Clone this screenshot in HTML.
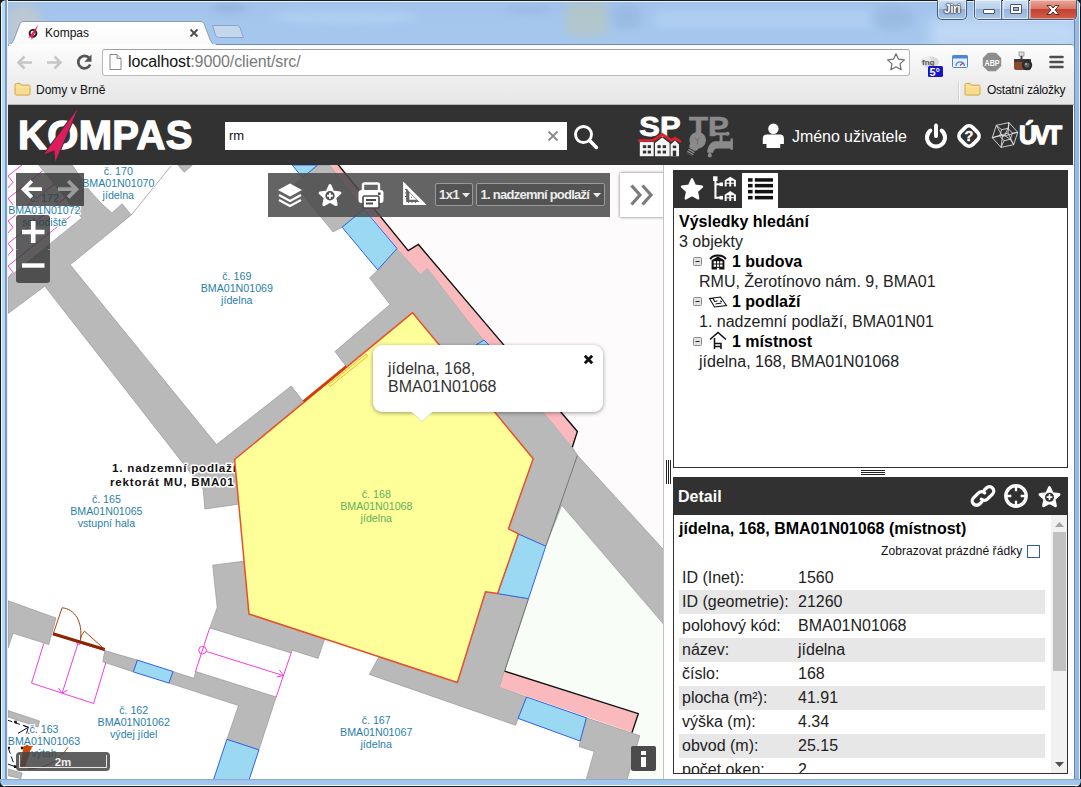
<!DOCTYPE html>
<html lang="cs">
<head>
<meta charset="utf-8">
<title>Kompas</title>
<style>
*{box-sizing:border-box;margin:0;padding:0}
html,body{width:1081px;height:787px;overflow:hidden}
body{position:relative;font-family:"Liberation Sans",Arial,sans-serif;background:#1c1c1c;color:#000}
.abs{position:absolute}
/* ---------- window frame ---------- */
#frame{left:0;top:0;width:1081px;height:787px;border-radius:7px 7px 7px 7px;overflow:hidden;
 background:linear-gradient(180deg,#a1c2ea 0,#a4c6ec 20px,#a6c8ee 44px,#a6cbf0 110px,#a6cbf0 100%)}
#frame .edgeL{left:0;top:0;width:8px;height:787px;background:linear-gradient(90deg,#15151a 0,#15151a 1px,#eefcff 1px,#eefcff 2px,#b5dcfc 2px,#b9d9f8 5px,#7b9bb8 5.500px,#7b9bb8 7px,#f2f1ef 7px,#f2f1ef 8px)}
#frame .edgeR{left:1074px;top:0;width:7px;height:787px;background:linear-gradient(90deg,#6887a2 0,#6887a2 1px,#9bb9e4 1.500px,#94b8e0 5px,#e4f4fe 5px,#e4f4fe 6px,#0d1119 6px)}
#frame .edgeB{left:0;top:779px;width:1081px;height:8px;background:linear-gradient(180deg,#8fa9c8 0,#8fa9c8 1px,#9fc4ee 1px,#a3c8f0 6px,#eef6fe 6px,#eef6fe 7px,#1c1c1c 7px)}
#frame .edgeT{left:0;top:0;width:1081px;height:2px;background:linear-gradient(180deg,#1c1c1c 0,#1c1c1c 1px,#eaf4fe 1px,#eaf4fe 2px)}
.blob{position:absolute;border-radius:50%;filter:blur(6px)}
/* ---------- chrome ---------- */
#tab{left:8px;top:21px;width:212px;height:24px;z-index:2}
#toolbar{left:8px;top:44px;width:1066px;height:33px;background:linear-gradient(180deg,#fdfdfd 0,#efefef 100%);border-top:1px solid #6f87a8;border-radius:3px 3px 0 0}
#bookbar{left:8px;top:77px;width:1066px;height:28px;background:linear-gradient(180deg,#efefef 0,#e6e6e6 100%);border-bottom:1px solid #b6b4b6}
#omni{left:102px;top:49px;width:808px;height:27px;background:#fff;border:1px solid #b9b9b9;border-top-color:#a2a2a2;border-radius:3px}
.ui{font-family:"Liberation Sans","DejaVu Sans",sans-serif}
/* ---------- app ---------- */
#app{left:8px;top:105px;width:1066px;height:674px;background:#fff;overflow:hidden}
#hdr{left:0;top:0;width:1065px;height:60px;background:#323232}
#map{left:0;top:60px;width:655px;height:614px;background:#fff;overflow:hidden}
.lbl{font-size:10.67px;line-height:12px;text-anchor:middle;fill:#2a7fa8}
</style>
</head>
<body>
<div id="frame" class="abs">
  <div class="blob" style="left:6px;top:4px;width:36px;height:40px;background:#c3c8cc;opacity:.8;filter:blur(5px)"></div>
  <div class="blob" style="left:212px;top:3px;width:34px;height:10px;background:#8fb0dc;opacity:.7;filter:blur(3px)"></div>
  <div class="blob" style="left:270px;top:10px;width:150px;height:14px;background:#b4d2f4;opacity:.7;filter:blur(4px)"></div>
  <div class="blob" style="left:505px;top:6px;width:46px;height:8px;background:#94b4de;opacity:.55;filter:blur(3px)"></div>
  <div class="blob" style="left:566px;top:0px;width:42px;height:36px;background:#c6c79c;opacity:.4;filter:blur(5px);border-radius:6px"></div>
  <div class="blob" style="left:612px;top:4px;width:30px;height:26px;background:#8fb0dc;opacity:.5;filter:blur(4px)"></div>
  <div class="blob" style="left:655px;top:10px;width:225px;height:18px;background:#b6d3f4;opacity:.6;filter:blur(4px);border-radius:4px"></div>
  <div class="blob" style="left:870px;top:6px;width:44px;height:24px;background:#8eaed6;opacity:.45;filter:blur(4px)"></div>
  <div class="blob" style="left:930px;top:18px;width:150px;height:30px;background:#c6dcf7;opacity:.8;filter:blur(7px);border-radius:8px"></div>
  <div class="abs edgeT"></div><div class="abs edgeL"></div><div class="abs edgeR"></div><div class="abs edgeB"></div>
</div>


<!-- window caption buttons -->
<div class="abs" style="left:937px;top:0;width:30px;height:20px;border:1px solid #4a5a70;border-top:none;border-radius:0 0 5px 5px;background:linear-gradient(180deg,#c8dcf2 0,#b4cdea 45%,#93b1d6 50%,#a8c4e6 100%);box-shadow:inset 0 0 0 1px rgba(255,255,255,.55)"></div>
<div class="abs ui" style="left:937px;top:2px;width:30px;height:15px;text-align:center;font-size:12px;line-height:15px;font-weight:bold;color:#fff;letter-spacing:-.5px;text-shadow:0 0 2px #223,0 0 1px #223,0 0 2px #223">Jiri</div>
<div class="abs" style="left:974px;top:0;width:103px;height:20px;border:1px solid #4a5a70;border-top:none;border-radius:0 0 5px 5px;overflow:hidden;box-shadow:0 0 0 1px rgba(255,255,255,.35)">
  <div class="abs" style="left:0;top:0;width:27px;height:19px;background:linear-gradient(180deg,#cfe0f4 0,#b9d0ec 45%,#98b4d8 50%,#adc8e8 100%);border-right:1px solid #5b6b82;box-shadow:inset 0 0 0 1px rgba(255,255,255,.55)"></div>
  <div class="abs" style="left:28px;top:0;width:26px;height:19px;background:linear-gradient(180deg,#cfe0f4 0,#b9d0ec 45%,#98b4d8 50%,#adc8e8 100%);border-right:1px solid #5b6b82;box-shadow:inset 0 0 0 1px rgba(255,255,255,.55)"></div>
  <div class="abs" style="left:55px;top:0;width:47px;height:19px;background:linear-gradient(180deg,#e8a99a 0,#d9786a 45%,#c4402f 50%,#d2604c 100%);box-shadow:inset 0 0 0 1px rgba(255,255,255,.4)"></div>
  <div class="abs" style="left:8px;top:9px;width:12px;height:5px;background:#fff;border:1px solid #4a5568;border-radius:1px"></div>
  <div class="abs" style="left:35px;top:4px;width:12px;height:10px;background:#fff;border:1px solid #4a5568;border-radius:1px"></div>
  <div class="abs" style="left:38px;top:7px;width:6px;height:4px;background:#9db7da;border:1px solid #4a5568"></div>
  <svg class="abs" style="left:70px;top:4px" width="16" height="12" viewBox="0 0 16 12"><path d="M2 1.500h3.800L8 4l2.200-2.500H14L10.200 6 14 10.500h-3.800L8 8 5.800 10.500H2L5.800 6z" fill="#fff" stroke="#5a2a28" stroke-width="1"/></svg>
</div>

<!-- new tab button -->
<svg class="abs" style="left:208px;top:22px" width="40" height="22" viewBox="0 0 40 22"><path d="M4.5 3.5h24c2 0 3 1 3.6 2.6l3.4 9.400h-24.500c-2 0-3-1-3.600-2.600z" fill="#c9d9ec" fill-opacity=".85" stroke="#8ea4c2" stroke-width="1"/></svg>
<!-- active tab -->
<svg id="tab" class="abs" width="212" height="24" viewBox="0 0 212 24">
  <defs><linearGradient id="tg" x1="0" y1="0" x2="0" y2="1"><stop offset="0" stop-color="#ffffff"/><stop offset="1" stop-color="#fafafa"/></linearGradient></defs>
  <path d="M0 24 C4 23 5 21 6.500 17 L11.500 4 C12.500 1.500 13.500 .5 16 .5 H192 C194.500 .5 195.500 1.500 196.500 4 L201.500 17 C203 21 204 23 208 24 Z" fill="url(#tg)" stroke="#8d9cb3" stroke-width="1"/>
  <rect x="1" y="23" width="206.500" height="1.200" fill="#fcfcfc"/>
</svg>
<!-- favicon -->
<svg class="abs" style="left:25px;top:24px;z-index:3" width="16" height="17" viewBox="0 0 16 17"><circle cx="8" cy="9.300" r="3.400" fill="none" stroke="#222" stroke-width="1.900"/><path d="M13.500 .5 L3.200 14 L6.200 12.800 L6.800 16 Z" fill="#e31c5f"/></svg>
<div class="abs ui" style="left:45px;top:25px;font-size:12px;line-height:16px;color:#111;z-index:3">Kompas</div>
<svg class="abs" style="left:189px;top:28px;z-index:3" width="10" height="10" viewBox="0 0 10 10"><path d="M1.500 1.500l7 7M8.500 1.500l-7 7" stroke="#4a4a4a" stroke-width="1.800"/></svg>

<div id="toolbar" class="abs"></div>
<div id="bookbar" class="abs"></div>
<!-- nav buttons -->
<svg class="abs" style="left:16px;top:53px" width="84" height="19" viewBox="0 0 84 19">
  <path d="M16 9.500H3.500M8.500 3.500L2.500 9.500l6 6" fill="none" stroke="#c6c6c6" stroke-width="2.600"/>
  <path d="M31 9.500h12.500M38.500 3.500l6 6l-6 6" fill="none" stroke="#c6c6c6" stroke-width="2.600"/>
  <path d="M73.300 5.200A6.200 6.200 0 1 0 74.200 11.500" fill="none" stroke="#555" stroke-width="2.700"/>
  <path d="M75.500 1.500v7.200h-7.200z" fill="#555"/>
</svg>
<div id="omni" class="abs"></div>
<svg class="abs" style="left:109px;top:54px" width="13" height="16" viewBox="0 0 13 16"><path d="M1 .5h7l4 4v11H1z" fill="#fdfdfd" stroke="#8a8a8a"/><path d="M8 .5v4h4" fill="#e2e2e2" stroke="#8a8a8a"/></svg>
<div class="abs ui" style="left:128px;top:52px;font-size:16px;line-height:20px;color:#111;letter-spacing:-.1px;white-space:nowrap">localhost<span style="color:#7a7a7a">:9000/client/src/</span></div>
<svg class="abs" style="left:886px;top:52px" width="20" height="20" viewBox="0 0 20 20"><path d="M10 1.800l2.500 5.400 5.900.7-4.400 4 1.200 5.800L10 14.800l-5.200 2.900 1.200-5.800-4.400-4 5.900-.7z" fill="#fff" stroke="#6b6b6b" stroke-width="1.200" stroke-linejoin="round"/></svg>
<!-- extension icons -->
<svg class="abs" style="left:918px;top:51px" width="28" height="28" viewBox="0 0 28 28">
  <ellipse cx="12" cy="11" rx="9" ry="5.500" fill="#d9d9d9"/><ellipse cx="9" cy="9" rx="4" ry="3" fill="#ececec"/>
  <text x="4" y="14" font-size="8" font-weight="bold" fill="#555" font-family="Liberation Sans,sans-serif">fng</text>
  <rect x="10" y="15" width="15" height="11" rx="1.500" fill="#1414c8"/>
  <text x="11.500" y="25" font-size="11" font-weight="bold" fill="#fff" font-family="Liberation Sans,sans-serif">5°</text>
</svg>
<svg class="abs" style="left:952px;top:55px" width="17" height="14" viewBox="0 0 17 14"><rect x=".5" y=".5" width="15" height="12" rx="1" fill="#e8f1fc" stroke="#4a86d6"/><rect x=".5" y=".5" width="15" height="3" fill="#4a86d6"/><path d="M4 11a4.200 4.200 0 0 1 8.400 0" fill="none" stroke="#4a86d6" stroke-width="1.300"/><path d="M8 10.500l3-2.500" stroke="#d33" stroke-width="1.200"/></svg>
<svg class="abs" style="left:982px;top:52px" width="20" height="20" viewBox="0 0 20 20"><path d="M6.100 .8h7.800l5.300 5.300v7.800l-5.300 5.300H6.100L.8 13.900V6.100z" fill="#8d8d8d"/><text x="10" y="13.600" text-anchor="middle" font-size="9.500" font-weight="bold" fill="#fff" font-family="Liberation Sans,sans-serif" textLength="15" lengthAdjust="spacingAndGlyphs">ABP</text></svg>
<svg class="abs" style="left:1013px;top:50px" width="22" height="24" viewBox="0 0 22 24"><rect x="6" y="2" width="5" height="4" fill="#ddd" stroke="#777" stroke-width=".6"/><rect x="7.500" y="6" width="2" height="3" fill="#444"/><rect x="1" y="9" width="17" height="11" rx="2" fill="#8b4a2b"/><rect x="1" y="9" width="17" height="3" rx="1" fill="#3a3a3a"/><circle cx="14" cy="15" r="5.200" fill="#2b2b2b"/><circle cx="14" cy="15" r="2.600" fill="#5d5d6a"/><circle cx="13" cy="14" r="1" fill="#b9b9c6"/></svg>
<svg class="abs" style="left:1049px;top:55px" width="15" height="14" viewBox="0 0 15 14"><path d="M1.500 2h12M1.500 7h12M1.500 12h12" stroke="#4e4e4e" stroke-width="2.600" stroke-linecap="round"/></svg>
<!-- bookmarks -->
<svg class="abs" style="left:14px;top:82px" width="17" height="14" viewBox="0 0 17 15" preserveAspectRatio="none"><path d="M1 3.200c0-1 .5-1.700 1.500-1.700h3.600l1.400 1.800h7c1 0 1.500.6 1.500 1.500v7.700c0 1-.5 1.500-1.500 1.500h-12c-1 0-1.500-.5-1.500-1.500z" fill="#f9dc8f" stroke="#d0a347" stroke-width="1"/><path d="M1.500 5.200h14" stroke="#fbe7ae" stroke-width="1.200"/></svg>
<div class="abs ui" style="left:36px;top:82px;font-size:12px;line-height:16px;color:#111">Domy v Brně</div>
<div class="abs" style="left:958px;top:81px;width:1px;height:20px;background:#d0d0d0;border-right:1px solid #fafafa;width:2px"></div>
<svg class="abs" style="left:964px;top:82px" width="17" height="14" viewBox="0 0 17 15" preserveAspectRatio="none"><path d="M1 3.200c0-1 .5-1.700 1.500-1.700h3.600l1.400 1.800h7c1 0 1.500.6 1.500 1.500v7.700c0 1-.5 1.500-1.500 1.500h-12c-1 0-1.500-.5-1.500-1.500z" fill="#f9dc8f" stroke="#d0a347" stroke-width="1"/><path d="M1.500 5.200h14" stroke="#fbe7ae" stroke-width="1.200"/></svg>
<div class="abs ui" style="left:987px;top:82px;font-size:12px;line-height:16px;color:#111;letter-spacing:-.25px">Ostatní záložky</div>


<!-- APP -->
<div id="app" class="abs">
  <div id="hdr" class="abs">
  
<!-- KOMPAS logo -->
<div class="abs" style="left:10px;top:8px;font-size:40px;line-height:44px;font-weight:bold;color:#fff;letter-spacing:.35px;-webkit-text-stroke:1.300px #fff;white-space:nowrap">KOMPAS</div>
<svg class="abs" style="left:30px;top:0" width="50" height="60" viewBox="0 0 50 60"><path d="M39.500 4.200 L6.200 49.300 L16.400 45.300 L17.300 56.400 Z" fill="#e01b5d" stroke="#323232" stroke-width="2" stroke-linejoin="miter" paint-order="stroke"/></svg>
<!-- search -->
<div class="abs" style="left:217px;top:17px;width:342px;height:28px;background:#fff"></div>
<div class="abs" style="left:221px;top:23px;font-size:13px;line-height:16px;color:#111">rm</div>
<svg class="abs" style="left:539px;top:25px" width="12" height="12" viewBox="0 0 12 12"><path d="M1.500 1.500l9 9M10.500 1.500l-9 9" stroke="#8c8c8c" stroke-width="1.900"/></svg>
<svg class="abs" style="left:564px;top:18px" width="28" height="28" viewBox="0 0 28 28"><circle cx="11.500" cy="11.500" r="8" fill="none" stroke="#fff" stroke-width="2.900"/><path d="M17.600 17.600l6.800 6.800" stroke="#fff" stroke-width="3.600" stroke-linecap="round"/></svg>
<!-- SP / TP logos -->
<svg class="abs" style="left:628px;top:8px" width="104" height="48" viewBox="0 0 104 48" font-family="Liberation Sans, sans-serif" font-weight="bold" font-size="27">
  <text x="3.300" y="22.800" fill="#fff" stroke="#fff" stroke-width=".8" textLength="41.200" lengthAdjust="spacingAndGlyphs">SP</text>
  <g fill="#f4f4f4">
    <rect x="3.800" y="29" width="13.900" height="14.200"/>
    <path d="M19 43.200V30L26.200 24.500 33.600 30V43.200z"/>
    <path d="M34.600 43.200V31.500L39 27.500 43 31.500V43.200z"/>
  </g>
  <g fill="#323232">
    <rect x="6.900" y="32.200" width="3.300" height="2.900"/><rect x="11.700" y="32.200" width="3.300" height="2.900"/>
    <rect x="6.900" y="37.600" width="3.300" height="2.900"/><rect x="11.700" y="37.600" width="3.300" height="2.900"/>
    <rect x="21.500" y="32.200" width="3.200" height="2.900"/><rect x="26.700" y="32.200" width="3.300" height="2.900"/>
    <rect x="21.500" y="37.600" width="3.200" height="2.900"/><rect x="26.700" y="37.600" width="3.300" height="2.900"/>
    <rect x="36.800" y="32.600" width="3.400" height="2.600"/><rect x="36.800" y="37.600" width="3.400" height="5.600"/>
  </g>
  <path d="M2.300 27.700 L17.300 27.300 L26.200 21.300 L35.400 27.400 L39 25 L45 29" fill="none" stroke="#e0202c" stroke-width="2.700" stroke-linejoin="miter"/>
  <text x="52.900" y="22.800" fill="#8a8a8a" stroke="#8a8a8a" stroke-width=".6" textLength="39.800" lengthAdjust="spacingAndGlyphs">TP</text>
  <g fill="#8a8a8a">
    <g transform="rotate(30 61.700 27.200)">
      <circle cx="61.700" cy="27.200" r="8.300"/>
      <path d="M57 33 h9.400 v3 l-1.200 1.200 v6.600 h-7 v-6.600 l-1.200 -1.200z"/>
      <path d="M57.400 38.600h8.600M57.400 40.800h8.600M57.400 43h8.600" stroke="#2e2e2e" stroke-width=".9"/>
    </g>
    <path d="M59 24.500 l2.400 3.200 2.200 -3 M61.400 27.700 v4" fill="none" stroke="#6a6a6a" stroke-width=".8"/>
    <rect x="78.200" y="19.400" width="14" height="2.800" rx="1.400"/>
    <circle cx="78.800" cy="20.800" r="2"/><circle cx="91.600" cy="20.800" r="2"/>
    <rect x="83.600" y="20" width="3" height="9"/>
    <path d="M79 28.300 h15.500 v-2.800 h2.400 v11.200 h-2.400 v-1.200 h-13 c-2.500 0 -4 1.200 -4.300 4.300 h-6 c.3 -7.500 4.500 -11.500 7.800 -11.500z"/>
    <path d="M73.800 38.800c1.300 1.700 2 2.700 2 3.800a2 2 0 0 1-4 0c0-1.100.7-2.100 2-3.800z"/>
  </g>
</svg>
<!-- user -->
<svg class="abs" style="left:753px;top:18px" width="26" height="26" viewBox="0 0 26 26"><circle cx="12.400" cy="5.700" r="5.200" fill="#fff"/><path d="M1.800 21V15.600Q1.800 11.600 5.800 11.600H18.900Q22.900 11.600 22.900 15.600V21H19.200V25H5.500V21z" fill="#fff"/></svg>
<div class="abs" style="left:784px;top:22px;font-size:16px;line-height:20px;color:#fff;white-space:nowrap;letter-spacing:-.06px">Jméno uživatele</div>
<!-- power -->
<svg class="abs" style="left:914px;top:18px" width="28" height="28" viewBox="0 0 28 28"><path d="M8.300 7.600A9 9 0 1 0 19.700 7.600" fill="none" stroke="#fff" stroke-width="4" stroke-linecap="round"/><path d="M14 2.500v10.500" stroke="#fff" stroke-width="4" stroke-linecap="round"/></svg>
<!-- help -->
<svg class="abs" style="left:946px;top:16px" width="30" height="30" viewBox="0 0 30 30"><rect x="6.300" y="6.300" width="17.400" height="17.400" rx="5.500" transform="rotate(45 15 15)" fill="none" stroke="#fff" stroke-width="3.700"/><text x="15" y="20.200" text-anchor="middle" font-size="14.500" font-weight="bold" fill="#fff" stroke="#fff" stroke-width=".4" font-family="Liberation Sans,sans-serif">?</text></svg>
<!-- UVT -->
<svg class="abs" style="left:983px;top:16px" width="28" height="28" viewBox="0 0 28 28"><path d="M26.7 11.3 L22.7 23.7 L10.0 26.4 L1.3 16.7 L5.3 4.3 L18.0 1.6Z M21.4 12.1 L19.3 18.3 L13.0 19.7 L8.6 14.9 L10.7 8.7 L17.0 7.3Z M26.7 11.3L21.4 12.1 M22.7 23.7L19.3 18.3 M10.0 26.4L13.0 19.7 M1.3 16.7L8.6 14.9 M5.3 4.3L10.7 8.7 M18.0 1.6L17.0 7.3 M11.5 15.5L26.7 11.3 M17.0 12.0L22.7 23.7 M11.5 15.5L10.0 26.4 M17.0 12.0L1.3 16.7 M11.5 15.5L5.3 4.3 M17.0 12.0L18.0 1.6 M13.5 14.5L19.3 18.3 M13.5 14.5L8.6 14.9 M13.5 14.5L17.0 7.3" fill="none" stroke="#e6e6e6" stroke-width=".85"/></svg>
<div class="abs" style="left:1011px;top:17px;font-size:25px;line-height:26px;font-weight:bold;color:#fff;letter-spacing:-3.500px;-webkit-text-stroke:1.300px #fff;white-space:nowrap">ÚVT</div>

  </div>
  <div id="map" class="abs">
  <svg class="abs" style="left:0;top:0" width="656" height="614" viewBox="8 165 656 614" font-family="Liberation Sans, sans-serif">
<defs><clipPath id="c172"><polygon points="8,165 38.7,165 81.8,217.9 8,278"/></clipPath></defs>
<polygon points="338,165 664,165 664,550.2 577.4,455.3 577.4,431.5 418.4,244.5 408.2,250.6" fill="#fdfbfb"/>
<polygon points="561.7,505.1 528.5,598.7 504.6,671.2 638.3,713.7 632,732.6 639.8,735.7 627,780 664,780 664,624.7" fill="#f8fdf8"/>
<path d="M8,176 l62.6,-49.8 M8,176 l5.0,6.3 M13.0,182.3 l-6.3,7.0 M8,198.5 l62.6,-49.8 M8,198.5 l5.0,6.3 M13.0,204.8 l-6.3,7.0 M8,221 l62.6,-49.8 M8,221 l5.0,6.3 M13.0,227.3 l-6.3,7.0 M8,243.5 l62.6,-49.8 M8,243.5 l5.0,6.3 M13.0,249.8 l-6.3,7.0 M8,266 l62.6,-49.8 M8,266 l5.0,6.3 M13.0,272.3 l-6.3,7.0" clip-path="url(#c172)" stroke="#f53ce0" stroke-width="1" fill="none"/>
<path d="M131.3,214.9 L171,166" stroke="#9a9a9a" stroke-width=".8" fill="none"/>
<polygon points="8,278 81.8,217.9 38.7,165 72.2,165 89.5,190.5 101.7,203.8 111.9,212.9 122.1,203.8 131.3,214.9 70.2,264.8 216.5,444.6 291.2,386.1 303.4,401.4 234.6,459.5 239.6,504.1 204.9,509 203.2,489.2 44.8,286.2 8,313.6" fill="#b9b9b9" stroke="#8e8e8e" stroke-width=".6"/>
<polygon points="335,351.5 390,304.5 369.6,278 377.7,269.9 397,248.5 420.4,274 427.6,267.9 467.5,320 544.8,413.6 572.3,447.2 577.4,455.3 664,550.2 664,624.7 561.7,505.1 545.8,546.2 518.4,533.8 508.4,528.9 533.2,458.8 412.6,312.7 346.2,366.4" fill="#b9b9b9" stroke="#8e8e8e" stroke-width=".6"/>
<polygon points="317.7,165 302.4,177.6 294.3,184.2 333,232 342.1,227.2 364.1,209.2 330,165" fill="#b9b9b9" stroke="#8e8e8e" stroke-width=".6"/>
<polygon points="485.5,591.8 497.6,593.6 528.5,598.7 504.6,671.2 499.9,686.9 526.6,697 515.6,725.3 369.3,674.4 378.8,657.1 457.4,682.5" fill="#b9b9b9" stroke="#8e8e8e" stroke-width=".6"/>
<polygon points="212.7,565.2 244.3,561.1 249,614 324.7,639 318.1,658.4 292.1,650.2 291,653 209.7,627.9 217.2,607.5" fill="#b9b9b9" stroke="#8e8e8e" stroke-width=".6"/>
<polygon points="8,600.7 56,618 48.8,644.5 13.2,633.3 8,648" fill="#b9b9b9" stroke="#8e8e8e" stroke-width=".6"/>
<polygon points="104.8,650.6 137.4,660.1 133.3,671.9 102.8,661.8" fill="#b9b9b9" stroke="#8e8e8e" stroke-width=".6"/>
<polygon points="173,671.5 193.8,678.3 195.8,671.5 276.2,697 258.9,749.9 226.9,739.3 238.5,705.5 168.9,683.1" fill="#b9b9b9" stroke="#8e8e8e" stroke-width=".6"/>
<polygon points="586.4,717.8 639.8,735.7 627,780 586,780 594.2,751.4 579,746.5" fill="#b9b9b9" stroke="#8e8e8e" stroke-width=".6"/>
<polygon points="178,165 184.2,172.2 192.3,165" fill="#b9b9b9" stroke="#8e8e8e" stroke-width=".6"/>
<polygon points="8,710.5 39.5,720.9 38,727 8,717" fill="#b9b9b9" stroke="#8e8e8e" stroke-width=".6"/>
<polygon points="7.6,768.8 22.2,773 20.8,778.5 7.6,775.7" fill="#b9b9b9" stroke="#8e8e8e" stroke-width=".6"/>
<path d="M577.4,455.3 L545.8,546.2 M528.5,598.7 L504.6,671.2" stroke="#6e6e6e" stroke-width=".9" fill="none"/>
<polygon points="330,165 338,165 408.2,250.6 418.4,244.5 482.7,320 577.4,431.5 572.3,447.2 544.8,413.6 467.5,320 427.6,267.9 420.4,274 397,248.5" fill="#fab9bc"/>
<polygon points="504.6,671.2 638.3,713.7 632,732.6 499.9,686.9" fill="#fab9bc"/>
<path d="M336,162 L408.2,250.6 L418.4,244.5 L577.4,431.5 L572.3,447.2" stroke="#111" stroke-width="1.400" fill="none"/>
<path d="M504.6,671.2 L638.3,713.7 L632,732.6" stroke="#111" stroke-width="1.400" fill="none"/>
<polygon points="292.2,165 302.4,177.6 317.7,165" fill="#9bd9f3" stroke="#2f62e6" stroke-width="1"/>
<polygon points="342.1,227.2 364.1,209.2 397,248.5 377.7,269.9" fill="#9bd9f3" stroke="#2f62e6" stroke-width="1"/>
<polygon points="518.3,534 545.8,546.2 528.5,598.7 497.6,593.6" fill="#9bd9f3" stroke="#2f62e6" stroke-width="1"/>
<polygon points="137.4,660.1 173,671.5 168.9,683.1 133.3,671.9" fill="#9bd9f3" stroke="#2f62e6" stroke-width="1"/>
<polygon points="226.9,739.3 258.9,749.9 248.7,781 213.1,781" fill="#9bd9f3" stroke="#2f62e6" stroke-width="1"/>
<polygon points="526.6,697 586.4,717.8 580.1,741 518.1,718.4" fill="#9bd9f3" stroke="#2f62e6" stroke-width="1"/>
<polygon points="476,345 484,340 489,345" fill="#9bd9f3" stroke="#2f62e6" stroke-width="1"/>
<g font-size="11.600" font-weight="bold" fill="#111" stroke="#fff" stroke-width="3" paint-order="stroke" stroke-linejoin="round" letter-spacing=".8"><text x="112" y="472">1. nadzemní podlaží</text><text x="110" y="486">rektorát MU, BMA01</text></g>
<g stroke="#f53ce0" stroke-width="1" fill="none"><path d="M43.8,643.4 L31.5,683.1 L93.6,703.5 L105.8,662.8 M52.9,634.500 L104.8,650.5 M78.3,642.4 L62.1,693.3 M58.5,688 L62.1,693.3 L67.500,690"/><circle cx="78.6" cy="642.8" r="1.800"/><circle cx="202.5" cy="650.2" r="3.800"/><path d="M209.6,628.2 L195.4,671.9 M206.2,651.4 L283.3,675.6 M276.500,677 L283.3,675.6 L279.500,670 M291.4,652.2 L276.2,697"/></g>
<polygon points="234.6,459.5 412.6,312.7 533.2,458.8 508.4,528.9 518.4,533.8 497.6,593.6 485.5,591.8 457.4,682.5 249,614" fill="#ffff99" stroke="#e8502c" stroke-width="1.500" stroke-linejoin="round"/>
<path d="M303.4,401.4 L346.2,366.4" stroke="#d43a0c" stroke-width="2.600"/>
<polygon points="328.5,384.6 366.1,354.1 367.7,356.1 330.1,386.6" fill="#fffa90" stroke="#e3a81c" stroke-width=".8"/>
<path d="M52.9,633.7 L104.8,649.5" stroke="#8b2500" stroke-width="3"/>
<path d="M53.5,633 L62.1,607.8 C75,609 83,622 80.4,640.4 M104.8,649.5 L84.5,631.2 C82,634 80.500,637 80.4,640.4" stroke="#a8430f" stroke-width="1" fill="none"/>
<g stroke="#111" stroke-width="1" fill="none"><path d="M7.6,720.2 L28.4,727.2" stroke-dasharray="5 3"/><path d="M28.4,727.2 L18,733.4 M28.4,727.2 L26.500,733.500 M24,725.800 L28.4,727.2"/><path d="M8.3,748 L14.6,766" stroke-dasharray="6 3"/><path d="M7.6,764 L15.3,766.7"/></g>
<g fill="#111"><rect x="14.200" y="720.700" width="2.600" height="2.600"/><rect x="20.900" y="746.700" width="2.600" height="2.600"/><rect x="14" y="765.400" width="2.600" height="2.600"/><rect x="8" y="746.800" width="2" height="2"/></g>
<path d="M23.5,746.500 L26.500,744.500 L32,746.800 L25.2,766.500 L20.3,766.500 Z" fill="#c84a06"/>
<path d="M68,747.3 C58,762 45,769 27.8,768.8" stroke="#a8430f" stroke-width="1" fill="none"/>
<path d="M28,733 l1.500,.5 M39,736 l1.500,.5 M31,746.500 l2,-.6" stroke="#c8400f" stroke-width="1.200"/>
<g stroke="#fff" stroke-width="2.200" paint-order="stroke" stroke-linejoin="round">
<text x="118.3" y="175.2" class="lbl" fill="#2a7fa8" style="fill:#2a7fa8">č. 170</text>
<text x="118.3" y="187.2" class="lbl" fill="#2a7fa8" style="fill:#2a7fa8">BMA01N01070</text>
<text x="118.3" y="199.2" class="lbl" fill="#2a7fa8" style="fill:#2a7fa8">jídelna</text>
<text x="44.4" y="201.8" class="lbl" fill="#2a7fa8" style="fill:#2a7fa8">č. 172</text>
<text x="44.4" y="213.8" class="lbl" fill="#2a7fa8" style="fill:#2a7fa8">BMA01N01072</text>
<text x="44.4" y="225.8" class="lbl" fill="#2a7fa8" style="fill:#2a7fa8">schodiště</text>
<text x="236.8" y="280" class="lbl" fill="#2a7fa8" style="fill:#2a7fa8">č. 169</text>
<text x="236.8" y="292" class="lbl" fill="#2a7fa8" style="fill:#2a7fa8">BMA01N01069</text>
<text x="236.8" y="304" class="lbl" fill="#2a7fa8" style="fill:#2a7fa8">jídelna</text>
<text x="106.4" y="502.9" class="lbl" fill="#2a7fa8" style="fill:#2a7fa8">č. 165</text>
<text x="106.4" y="514.9" class="lbl" fill="#2a7fa8" style="fill:#2a7fa8">BMA01N01065</text>
<text x="106.4" y="526.9" class="lbl" fill="#2a7fa8" style="fill:#2a7fa8">vstupní hala</text>
<text x="376.2" y="723.8" class="lbl" fill="#2a7fa8" style="fill:#2a7fa8">č. 167</text>
<text x="376.2" y="735.8" class="lbl" fill="#2a7fa8" style="fill:#2a7fa8">BMA01N01067</text>
<text x="376.2" y="747.8" class="lbl" fill="#2a7fa8" style="fill:#2a7fa8">jídelna</text>
<text x="133.7" y="713.7" class="lbl" fill="#2a7fa8" style="fill:#2a7fa8">č. 162</text>
<text x="133.7" y="725.7" class="lbl" fill="#2a7fa8" style="fill:#2a7fa8">BMA01N01062</text>
<text x="133.7" y="737.7" class="lbl" fill="#2a7fa8" style="fill:#2a7fa8">výdej jídel</text>
<text x="44" y="733.1" class="lbl" fill="#2a7fa8" style="fill:#2a7fa8">č. 163</text>
<text x="44" y="745.1" class="lbl" fill="#2a7fa8" style="fill:#2a7fa8">BMA01N01063</text>
<text x="44" y="757.1" class="lbl" fill="#2a7fa8" style="fill:#2a7fa8">výtah</text>
</g>
<text x="376.3" y="498" class="lbl" fill="#62b15a" style="fill:#62b15a">č. 168</text>
<text x="376.3" y="510" class="lbl" fill="#62b15a" style="fill:#62b15a">BMA01N01068</text>
<text x="376.3" y="522" class="lbl" fill="#62b15a" style="fill:#62b15a">jídelna</text>
</svg>
<!-- nav box -->
<div class="abs" style="left:8px;top:8px;width:68px;height:33px;background:rgba(52,52,52,.8)"></div>
<svg class="abs" style="left:8px;top:8px" width="68" height="33" viewBox="0 0 68 33"><path d="M26 16.200H9.500M15.800 8l-8.200 8.200 8.200 8.200" fill="none" stroke="#fff" stroke-width="3.800"/><path d="M42 16.200h16.500M52.200 8l8.200 8.200-8.200 8.200" fill="none" stroke="#9b9b9b" stroke-width="3.800"/></svg>
<!-- zoom box -->
<div class="abs" style="left:8px;top:50px;width:34px;height:68px;background:rgba(52,52,52,.8);border-radius:3px"></div>
<svg class="abs" style="left:8px;top:50px" width="34" height="68" viewBox="0 0 34 68"><path d="M6 17h22.500M17.200 6v22" stroke="#fff" stroke-width="4.600"/><path d="M6 50.500h22.500" stroke="#fff" stroke-width="4.400"/><path d="M0 34.500h2M32 34.500h2" stroke="#8a8a8a" stroke-width="1"/></svg>
<!-- toolbar -->
<div class="abs" style="left:260px;top:8px;width:342px;height:44px;background:rgba(74,74,74,.86)"></div>
<svg class="abs" style="left:268px;top:16px" width="28" height="28" viewBox="0 0 28 28"><path d="M14 2.500L26 9 14 15.500 2 9z" fill="#fff"/><path d="M3 14l11 6 11-6M3 19l11 6 11-6" fill="none" stroke="#fff" stroke-width="2.200"/></svg>
<svg class="abs" style="left:308px;top:16px" width="28" height="28" viewBox="0 0 30 30"><path d="M15 5l3.100 6.900 7.500.9-5.500 5.100 1.500 7.400L15 21.600 8.400 25.300l1.500-7.400-5.500-5.100 7.500-.9z" fill="#fff" stroke="#fff" stroke-width="3.200" stroke-linejoin="round"/><circle cx="15" cy="15.800" r="5" fill="#505050"/><path d="M15 12.600v6.400M11.800 15.800h6.400" stroke="#fff" stroke-width="1.900"/></svg>
<svg class="abs" style="left:349px;top:17px" width="28" height="28" viewBox="0 0 28 28"><rect x="6" y="1.500" width="16" height="9" rx="1.500" fill="none" stroke="#fff" stroke-width="2.400"/><rect x="1.500" y="8" width="25" height="13" rx="3" fill="#fff"/><rect x="6" y="14" width="16" height="12" rx="1.500" fill="#fff" stroke="#4a4a4a" stroke-width="1.600"/><path d="M9 18h10M9 21.500h7" stroke="#4a4a4a" stroke-width="1.800"/><rect x="21" y="10.500" width="2.600" height="2.400" fill="#4a4a4a"/></svg>
<svg class="abs" style="left:394px;top:17px" width="24" height="24" viewBox="0 0 24 24"><path d="M2.600 3V21.400H21z" fill="none" stroke="#fff" stroke-width="3" stroke-linejoin="miter"/><path d="M8.200 12.500V16.800H12.500z" fill="none" stroke="#fff" stroke-width="1.700"/><path d="M3 7.500h2.500M3 11h2.500M3 14.500h2.500M6.500 21v-2.500M10 21v-2.500M13.500 21v-2.500" stroke="#666" stroke-width="1"/></svg>
<div class="abs" style="left:427px;top:18px;width:38px;height:23px;border:1px solid #9a9a9a;border-radius:2px;background:rgba(0,0,0,.16)"></div>
<div class="abs" style="left:431px;top:22px;font-size:13px;line-height:16px;font-weight:bold;color:#ececec;letter-spacing:-.5px">1x1</div>
<svg class="abs" style="left:454px;top:28px" width="8" height="5" viewBox="0 0 8 5"><path d="M0 0h8L4 4.500z" fill="#ececec"/></svg>
<div class="abs" style="left:468px;top:18px;width:129px;height:23px;border:1px solid #9a9a9a;border-radius:2px;background:rgba(0,0,0,.16)"></div>
<div class="abs" style="left:472.500px;top:22px;font-size:13px;line-height:16px;font-weight:bold;color:#ececec;letter-spacing:-.74px;white-space:nowrap">1. nadzemní podlaží</div>
<svg class="abs" style="left:585px;top:28px" width="8" height="5" viewBox="0 0 8 5"><path d="M0 0h8L4 4.500z" fill="#ececec"/></svg>
<!-- collapse button -->
<div class="abs" style="left:612px;top:8px;width:50px;height:44px;background:#fff;box-shadow:0 0 3px rgba(0,0,0,.55)"></div>
<svg class="abs" style="left:621px;top:18px" width="26" height="24" viewBox="0 0 26 24"><path d="M2.500 2.500L11 12 2.500 21.500M13.500 2.500L22 12 13.500 21.500" fill="none" stroke="#7b7b7b" stroke-width="3.200"/></svg>
<!-- popup -->
<div class="abs" style="left:365px;top:180px;width:230px;height:67px;background:#fff;border-radius:9px;box-shadow:0 1px 4px rgba(0,0,0,.4)"></div>
<svg class="abs" style="left:402px;top:246px" width="24" height="12" viewBox="0 0 24 12"><path d="M0 0h24L12 10.500z" fill="#fff"/><path d="M1.500 1L12 10.500 22.500 1" fill="none" stroke="rgba(0,0,0,.12)" stroke-width="1"/></svg>
<div class="abs" style="left:380px;top:195px;font-size:16px;line-height:18.300px;color:#333;white-space:nowrap">jídelna, 168,<br>BMA01N01068</div>
<svg class="abs" style="left:575px;top:189px" width="11" height="11" viewBox="0 0 11 11"><path d="M1.800 1.800l7.400 7.400M9.200 1.800l-7.400 7.400" stroke="#111" stroke-width="2.800"/></svg>
<!-- scale -->
<div class="abs" style="left:8px;top:587px;width:94px;height:19px;background:rgba(68,68,68,.85);border-radius:4px"></div>
<div class="abs" style="left:11px;top:590px;width:88px;height:13px;border:1px solid #e4e4e4;border-top:none"></div>
<div class="abs" style="left:11px;top:591px;width:88px;text-align:center;font-size:11.500px;line-height:13px;font-weight:bold;color:#efefef">2m</div>
<!-- info -->
<div class="abs" style="left:623px;top:581px;width:25px;height:25px;background:#4b4b4b;border-radius:2px"></div>
<div class="abs" style="left:633px;top:586px;width:5px;height:4px;background:#fff"></div>
<div class="abs" style="left:633px;top:592px;width:5px;height:10px;background:#fff"></div>

  </div>
  
<!-- vertical splitter -->
<div class="abs" style="left:655px;top:60px;width:10px;height:614px;background:#fff;border-left:1px solid #c4c4c4"></div>
<div class="abs" style="left:658px;top:355px;width:5px;height:24px;border-left:1px solid #222;border-right:1px solid #222"></div>
<div class="abs" style="left:660px;top:355px;width:1px;height:24px;background:#222"></div>
<!-- results panel -->
<div class="abs" style="left:665px;top:65px;width:395px;height:298px;background:#fff;border:1px solid #313131"></div>
<div class="abs" style="left:665px;top:65px;width:395px;height:38px;background:#313131"></div>
<div class="abs" style="left:734px;top:68px;width:36px;height:36px;background:#fff"></div>
<svg class="abs" style="left:671px;top:71px" width="26" height="26" viewBox="0 0 26 26"><path d="M13 3.200l3 6.500 7.100.9-5.200 4.900 1.400 7L13 19l-6.300 3.500 1.400-7-5.200-4.900 7.100-.9z" fill="#fff" stroke="#fff" stroke-width="2.200" stroke-linejoin="round"/></svg>
<svg class="abs" style="left:703px;top:70px" width="28" height="28" viewBox="0 0 28 28"><g fill="#fff">
  <rect x="2.100" y="1.300" width="4.400" height="4.700"/><rect x="3.400" y="5" width="2.100" height="18.700"/>
  <rect x="4" y="8.300" width="6" height="2"/><rect x="8.600" y="7.500" width="3.400" height="3.600"/>
  <rect x="4" y="21.700" width="6" height="2"/><rect x="8.600" y="20.900" width="3.400" height="3.600"/>
  <path d="M13.700 11.500V5.300L19.300 1.700 24.900 5.300V11.500zM15.600 5.800h2.700v2H15.600zM20.200 5.800h2.700v2H20.200zM15.600 8.800h2.700v2.700H15.600zM20.200 8.800h2.700v2.700H20.200z" fill-rule="evenodd"/>
  <path d="M13.700 25.900V19.700L19.300 16.100 24.900 19.700V25.900zM15.600 20.200h2.700v2H15.600zM20.200 20.200h2.700v2H20.200zM15.600 23.200h2.700v2.700H15.600zM20.200 23.200h2.700v2.700H20.200z" fill-rule="evenodd"/>
</g></svg>
<svg class="abs" style="left:740px;top:73px" width="26" height="24" viewBox="0 0 26 24"><g fill="#111"><rect x="0" y=".2" width="4.600" height="3.500"/><rect x="6.800" y=".2" width="18.200" height="3.500"/><rect x="0" y="5.900" width="4.600" height="3.500"/><rect x="6.800" y="5.900" width="18.200" height="3.500"/><rect x="0" y="11.900" width="4.600" height="3.500"/><rect x="6.800" y="11.900" width="18.200" height="3.500"/><rect x="0" y="17.900" width="4.600" height="3.500"/><rect x="6.800" y="17.900" width="18.200" height="3.500"/></g></svg>
<div class="abs" style="left:671px;top:107px;font-size:16px;line-height:20px;color:#000;white-space:nowrap">
  <div style="font-weight:bold">Výsledky hledání</div>
  <div style="color:#222">3 objekty</div>
  <div style="font-weight:bold;padding-left:53px">1 budova</div>
  <div style="color:#222;padding-left:20px">RMU, Žerotínovo nám. 9, BMA01</div>
  <div style="font-weight:bold;padding-left:53px">1 podlaží</div>
  <div style="color:#222;padding-left:20px">1. nadzemní podlaží, BMA01N01</div>
  <div style="font-weight:bold;padding-left:53px">1 místnost</div>
  <div style="color:#222;padding-left:20px">jídelna, 168, BMA01N01068</div>
</div>
<!-- tree toggles -->
<svg class="abs" style="left:685px;top:152px" width="9" height="9" viewBox="0 0 9 9"><rect x=".5" y=".5" width="8" height="8" rx="1" fill="#e2e2e2" stroke="#8c8c8c"/><path d="M2.500 4.500h4" stroke="#222"/></svg>
<svg class="abs" style="left:685px;top:192px" width="9" height="9" viewBox="0 0 9 9"><rect x=".5" y=".5" width="8" height="8" rx="1" fill="#e2e2e2" stroke="#8c8c8c"/><path d="M2.500 4.500h4" stroke="#222"/></svg>
<svg class="abs" style="left:685px;top:232px" width="9" height="9" viewBox="0 0 9 9"><rect x=".5" y=".5" width="8" height="8" rx="1" fill="#e2e2e2" stroke="#8c8c8c"/><path d="M2.500 4.500h4" stroke="#222"/></svg>
<!-- building icon -->
<svg class="abs" style="left:701px;top:147px" width="18" height="18" viewBox="0 0 18 18"><path d="M1.200 7.200C4 2.300 14 2.300 16.800 7.200" fill="none" stroke="#111" stroke-width="2"/><path d="M2.600 17.500V8.200L9 4.600l6.400 3.600v9.300zM4.600 9.200h2.400v2.200H4.600zM7.900 9.200h2.300v2.200H7.900zM11.100 9.200h2.400v2.200h-2.400zM4.600 12.600h2.400v2.200H4.600zM7.900 12.600h2.300v2.200H7.900zM11.100 12.600h2.400v2.200h-2.400zM7.900 15.800h2.300v1.700H7.900z" fill="#111" fill-rule="evenodd"/></svg>
<!-- floor icon -->
<svg class="abs" style="left:700px;top:190px" width="20" height="14" viewBox="0 0 20 14"><path d="M1.500 3.500l11-1.500 6 8.500-12 1.500zM5 3l1.500 3.500 3-.5M12 6l2 .5M7.500 9l6-1" fill="none" stroke="#111" stroke-width="1.100"/></svg>
<!-- room icon -->
<svg class="abs" style="left:701px;top:226px" width="18" height="20" viewBox="0 0 18 20"><path d="M1 8.500L9 1.500l8 7" fill="none" stroke="#111" stroke-width="1.600"/><path d="M5.500 7v11M5.500 12.500h6.500v5.500M5.500 15.500h6.500" fill="none" stroke="#111" stroke-width="1.500"/></svg>
<!-- horizontal splitter grip -->
<div class="abs" style="left:853px;top:365px;width:24px;height:5px;border-top:1px solid #222;border-bottom:1px solid #222"></div>
<div class="abs" style="left:853px;top:367px;width:24px;height:1px;background:#222"></div>
<!-- detail panel -->
<div class="abs" style="left:665px;top:372px;width:395px;height:297px;background:#fff;border:1px solid #313131"></div>
<div class="abs" style="left:665px;top:372px;width:395px;height:38px;background:#313131"></div>
<div class="abs" style="left:670px;top:382px;font-size:16px;line-height:20px;font-weight:bold;color:#fff">Detail</div>
<svg class="abs" style="left:961px;top:377px" width="28" height="28" viewBox="0 0 28 28"><g fill="none" stroke="#fff" stroke-width="3.300" stroke-linecap="round"><path d="M12.300 17.200a4.300 4.300 0 0 0 6.100 0l5.100-5.100a4.300 4.300 0 0 0-6.100-6.100l-2.200 2.200"/><path d="M15.700 10.800a4.300 4.300 0 0 0-6.100 0l-5.100 5.100a4.300 4.300 0 0 0 6.100 6.100l2.200-2.200"/></g></svg>
<svg class="abs" style="left:995px;top:378px" width="26" height="26" viewBox="0 0 26 26"><circle cx="13" cy="13" r="10.200" fill="none" stroke="#fff" stroke-width="3.400"/><path d="M13 3v5.300M13 17.700v5.300M3 13h5.300M17.700 13h5.300" stroke="#fff" stroke-width="2.300"/></svg>
<svg class="abs" style="left:1028px;top:378px" width="27" height="27" viewBox="0 0 30 30"><path d="M15 5l3.100 6.900 7.500.9-5.500 5.100 1.500 7.400L15 21.600 8.400 25.300l1.500-7.400-5.500-5.100 7.500-.9z" fill="#fff" stroke="#fff" stroke-width="3.200" stroke-linejoin="round"/><circle cx="15" cy="15.800" r="5" fill="#2d2d2d"/><path d="M15 12.600v6.400M11.800 15.800h6.400" stroke="#fff" stroke-width="1.900"/></svg>
<div class="abs" style="left:671px;top:414px;font-size:16px;line-height:20px;font-weight:bold;color:#000;white-space:nowrap">jídelna, 168, BMA01N01068 (místnost)</div>
<div class="abs" style="left:873px;top:439px;font-size:12px;line-height:15px;color:#111;white-space:nowrap;letter-spacing:.08px">Zobrazovat prázdné řádky</div>
<div class="abs" style="left:1019px;top:440px;width:13px;height:13px;border:1px solid #2f5f9a;background:#fff"></div>
<div class="abs" style="left:671px;top:461px;width:366px;height:207px;overflow:hidden;font-size:16px;line-height:24px;color:#222;white-space:nowrap">
  <div style="height:24px;padding-left:3px"><span style="display:inline-block;width:116px">ID (Inet):</span>1560</div>
  <div style="height:24px;padding-left:3px;background:#e7e7e7"><span style="display:inline-block;width:116px">ID (geometrie):</span>21260</div>
  <div style="height:24px;padding-left:3px"><span style="display:inline-block;width:116px">polohový kód:</span>BMA01N01068</div>
  <div style="height:24px;padding-left:3px;background:#e7e7e7"><span style="display:inline-block;width:116px">název:</span>jídelna</div>
  <div style="height:24px;padding-left:3px"><span style="display:inline-block;width:116px">číslo:</span>168</div>
  <div style="height:24px;padding-left:3px;background:#e7e7e7"><span style="display:inline-block;width:116px">plocha (m²):</span>41.91</div>
  <div style="height:24px;padding-left:3px"><span style="display:inline-block;width:116px">výška (m):</span>4.34</div>
  <div style="height:24px;padding-left:3px;background:#e7e7e7"><span style="display:inline-block;width:116px">obvod (m):</span>25.15</div>
  <div style="height:24px;padding-left:3px"><span style="display:inline-block;width:116px">počet oken:</span>2</div>
</div>
<!-- scrollbar -->
<div class="abs" style="left:1043px;top:410px;width:16px;height:258px;background:#f1f1f1"></div>
<div class="abs" style="left:1045px;top:427px;width:13px;height:139px;background:#c1c1c1"></div>
<svg class="abs" style="left:1047px;top:417px" width="9" height="5" viewBox="0 0 9 5"><path d="M0 5L4.500 0L9 5z" fill="#a3a3a3"/></svg>
<svg class="abs" style="left:1047px;top:657px" width="9" height="5" viewBox="0 0 9 5"><path d="M0 0L4.500 5L9 0z" fill="#505050"/></svg>

</div>
</body>
</html>
